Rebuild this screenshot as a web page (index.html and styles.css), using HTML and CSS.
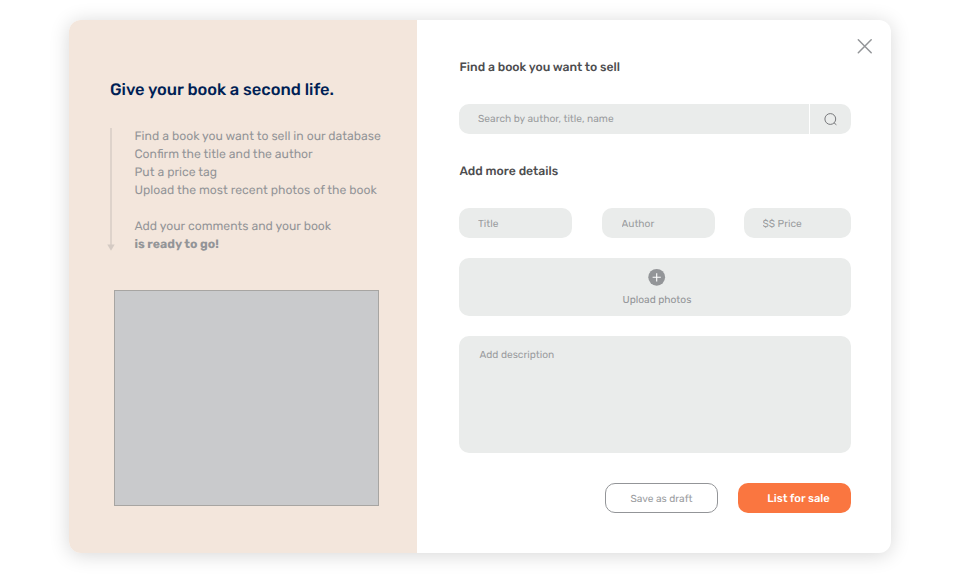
FILE: index.html
```html
<!DOCTYPE html>
<html lang="en">
<head>
    <meta charset="UTF-8">
    <title>Sell a book</title>
    <link rel="stylesheet" href="styles.css">
</head>
<body>
    <div class="modal">
        <div class="intro">
            <h1>Give your book a second life.</h1>
            <div class="steps">
                <svg class="arrow" width="8" height="123" viewBox="0 0 8 123">
                    <path d="M4 0V118" stroke="#d4cac3" stroke-width="1.4"/>
                    <path d="M0.3 116.5H7.7L4 122.8Z" fill="#d4cac3"/>
                </svg>
                <div class="steps-text">
                    <p>Find a book you want to sell in our database</p>
                    <p>Confirm the title and the author</p>
                    <p>Put a price tag</p>
                    <p>Upload the most recent photos of the book</p>
                    <p class="comments">Add your comments and your book</p>
                    <p class="ready">is ready to go!</p>
                </div>
            </div>
            <div class="picture"></div>
        </div>

        <form class="sell-form">
            <button type="button" class="close">
                <svg width="16" height="16" viewBox="0 0 16 16">
                    <path d="M1.3 1.8L14.2 14.7M14.2 1.8L1.3 14.7" stroke="#939598" stroke-width="1.5" stroke-linecap="round"/>
                </svg>
            </button>
            <h2>Find a book you want to sell</h2>
            <div class="search">
                <input type="text" placeholder="Search by author, title, name">
                <button type="button" class="search-btn">
                    <svg width="14" height="14" viewBox="0 0 14 14" fill="none" stroke="#77787b">
                        <circle cx="6.3" cy="7" r="5.4"/>
                        <path d="M10.1 10.9L12.4 12.8"/>
                    </svg>
                </button>
            </div>
            <h2 class="details-title">Add more details</h2>
            <div class="fields">
                <input type="text" class="title" placeholder="Title">
                <input type="text" class="author" placeholder="Author">
                <input type="text" class="price" placeholder="$$ Price">
            </div>
            <div class="upload">
                <svg width="18" height="18" viewBox="0 0 18 18">
                    <circle cx="8.7" cy="9.3" r="8.4" fill="#939598"/>
                    <path d="M8.7 5.2V13.4M4.6 9.3H12.8" stroke="#fff" stroke-width="1.1"/>
                </svg>
                <span>Upload photos</span>
            </div>
            <textarea placeholder="Add description"></textarea>
            <div class="actions">
                <button type="button" class="btn btn-draft">Save as draft</button>
                <button type="button" class="btn btn-list">List for sale</button>
            </div>
        </form>
    </div>
</body>
</html>
```
FILE: styles.css
```css
* {
    box-sizing: border-box;
}
body {
    margin: 0;
    padding: 20px 69px 28px;
    background: #fff;
    font-family: Rubik, Roboto, sans-serif;
    text-rendering: geometricPrecision;
    color: #939598;
}
h1, h2, p {
    margin: 0;
    white-space: nowrap;
}
input, textarea, button {
    font-family: inherit;
    text-rendering: inherit;
    border: none;
    outline: none;
}
svg {
    display: block;
}
.modal {
    display: flex;
    width: 822px;
    height: 533px;
    border-radius: 12px;
    background: #fff;
    box-shadow: 0 2px 20px rgba(0, 0, 0, 0.16);
}
.intro {
    width: 348px;
    padding: 61px 0 0 38px;
    background: #f3e6dc;
    border-radius: 12px 0 0 12px;
}
h1 {
    margin-left: 3px;
    font-size: 16.5px;
    line-height: 20px;
    font-weight: 500;
    color: #001f55;
}
.steps {
    display: flex;
    gap: 19.5px;
    margin-top: 27px;
}
.arrow {
    height: 123px;
}
.steps-text {
    font-size: 12.2px;
    line-height: 18px;
}
.comments {
    margin-top: 18px;
}
.ready {
    font-weight: 700;
}
.picture {
    width: 265px;
    height: 216px;
    margin: 36px 0 0 7px;
    background: #c9cacc;
    border: 1px solid #a7a5a2;
}
.sell-form {
    position: relative;
    flex: 1;
    padding: 38px 40px 0 42px;
}
.close {
    position: absolute;
    top: 18px;
    right: 18px;
    padding: 0;
    background: none;
}
h2 {
    padding-left: 0.5px;
    font-size: 12.2px;
    line-height: 20px;
    font-weight: 500;
    color: #4d4d4f;
}
.details-title {
    margin-top: 28px;
}
.search {
    display: flex;
    gap: 1px;
    margin-top: 26px;
}
input, textarea, .search-btn, .upload {
    background: #eaeceb;
    border-radius: 10px;
    font-size: 10.2px;
}
input {
    height: 30px;
    padding: 0 19px;
}
input::placeholder, textarea::placeholder {
    color: #9b9d9f;
}
.search input {
    flex: 1;
    padding-bottom: 1px;
    border-radius: 10px 0 0 10px;
}
.search-btn {
    display: flex;
    align-items: center;
    justify-content: center;
    width: 41px;
    padding: 0;
    border-radius: 0 10px 10px 0;
}
.fields {
    display: flex;
    justify-content: space-between;
    margin-top: 26px;
}
.fields input {
    width: 113px;
    padding-top: 1px;
}
.fields .author {
    padding-left: 20px;
}
.fields .price {
    width: 107px;
    padding-left: 18.5px;
}
.upload {
    display: flex;
    flex-direction: column;
    align-items: center;
    height: 58px;
    margin-top: 20px;
    padding-top: 10px;
    padding-left: 4px;
    line-height: 14px;
}
.upload span {
    margin-top: 7px;
}
textarea {
    display: block;
    width: 100%;
    height: 117px;
    margin-top: 20px;
    padding: 12px 20.5px;
    line-height: 14px;
    resize: none;
}
.actions {
    display: flex;
    justify-content: flex-end;
    gap: 20px;
    margin-top: 30px;
}
.btn {
    width: 113px;
    height: 30px;
    padding: 1px 0 0;
    border-radius: 10px;
    font-size: 10.2px;
}
.btn-draft {
    background: #fff;
    border: 1px solid #939598;
    color: #9b9d9f;
}
.btn-list {
    padding: 0 0 0 8px;
    background: #fa7640;
    color: #fff;
    font-size: 11.2px;
    font-weight: 500;
}
```
